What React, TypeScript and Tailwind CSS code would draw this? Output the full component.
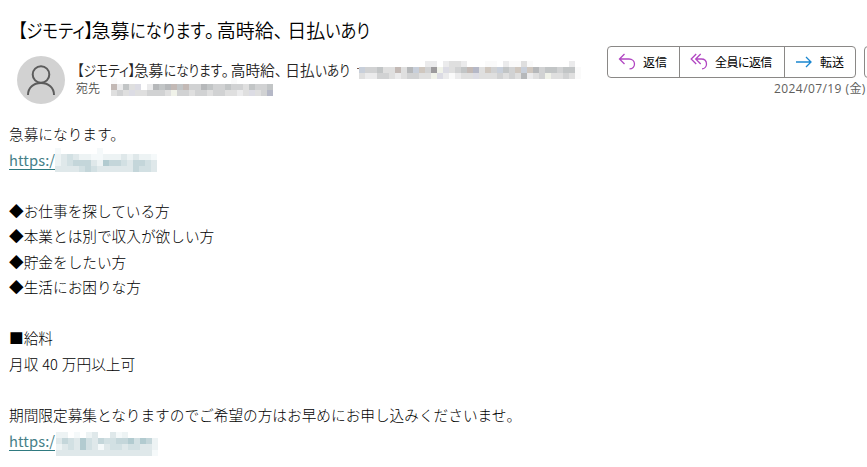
import React from 'react';

interface MosaicProps {
    rows: string[];
    palette: Record<string, string>;
    columns: number;
}

const grayPalette: Record<string, string> = {
    '.': 'transparent',
    a: '#fafafa',
    b: '#ebebec',
    c: '#dfdfdf',
    d: '#d1d2d3',
    e: '#c2c5c6',
    f: '#b6b8ba',
    g: '#9c9a9c',
    p: '#c3b9b5',
    r: '#cfc7bf',
    u: '#b5b8c7',
    v: '#dcdce4',
    w: '#c8cfda',
    y: '#f0f2e9',
};

const tealPalette: Record<string, string> = {
    '.': 'transparent',
    a: '#f5f9fa',
    b: '#edf3f4',
    c: '#dfe8ea',
    d: '#d2e0e3',
    e: '#c4d6da',
    f: '#b2cbd0',
    g: '#a5c0c7',
};

const senderMosaic = [
    '...........bb.bccb...aa.baaca......b.',
    'wddeccpcfwrdgyvcdepucrdwedrwrfdeedeea',
    'cbbddcbcddccyvbabccvcccdcdcfbcdyccdca',
];

const recipientMosaic = [
    'a...................a......',
    'pbecv.bfefpepddfeddeddcedde',
    'cdcvccdddcyddcddcddccbcvcdu',
];

const Mosaic: React.FC<MosaicProps> = ({ rows, palette, columns }) => (
    <div className="grid auto-rows-[6px]" style={{ gridTemplateColumns: `repeat(${columns}, 6px)` }} aria-hidden="true">
        {rows.flatMap((row, y) =>
            row.split('').map((cell, x) => (
                <span key={`${y}-${x}`} style={{ backgroundColor: palette[cell] }} />
            ))
        )}
    </div>
);

const ReplyIcon = () => (
    <svg width="18" height="18" viewBox="0 0 18 18" fill="none" stroke="#b146c2" strokeWidth="1.3">
        <path d="M6.500 1 1.500 6l5 5M1.500 6h9.500c3.200 0 5.500 2.100 5.500 5 0 2.700-2 4.800-5 4.800" />
    </svg>
);

const ReplyAllIcon = () => (
    <svg width="18" height="18" viewBox="0 0 18 18" fill="none" stroke="#b146c2" strokeWidth="1.3">
        <path d="M6.200 1 1.200 6l5 5M10.700 1l-5 5 5 5M5.700 6h5.500c3.200 0 5.300 2.100 5.300 5 0 2.700-2 4.800-4.500 4.800" />
    </svg>
);

const ForwardIcon = () => (
    <svg width="18" height="18" viewBox="0 0 18 18" fill="none" stroke="#1a86d0" strokeWidth="1.3">
        <path d="M1 9h15M11 4l5 5-5 5" />
    </svg>
);

// Kana are set narrower than kanji, so each run gets its own width
const Subject = () => (
    <span className="flex">
        <span className="w-[3.87em] shrink-0"><span className="inline-block origin-left scale-x-[0.87]">【ジモティ】</span></span>
        <span className="w-[2.03em] shrink-0">急募</span>
        <span className="w-[3.8em] shrink-0"><span className="inline-block origin-left scale-x-[0.86]">になります</span></span>
        <span className="w-[0.76em] shrink-0 pl-[0.13em]">。</span>
        <span className="w-[3em] shrink-0">高時給</span>
        <span className="w-[0.71em] shrink-0">、</span>
        <span className="w-[2em] shrink-0">日払</span>
        <span className="w-[2.25em] shrink-0"><span className="inline-block origin-left scale-x-[0.86]">いあり</span></span>
    </span>
);

const bodyLines = [
    '◆お仕事を探している方',
    '◆本業とは別で収入が欲しい方',
    '◆貯金をしたい方',
    '◆生活にお困りな方',
    '',
    '■給料',
    '月収 40 万円以上可',
    '',
    '期間限定募集となりますのでご希望の方はお早めにお申し込みくださいませ。',
];

const MaskedLink: React.FC<{ rows: string[]; className: string }> = ({ rows, className }) => (
    <div className="flex h-[25.56px] items-start">
        <a className="mt-[2px] h-[21px] w-[46px] shrink-0 border-b border-[#2f7a80] text-[14.7px] leading-[21px] font-normal tracking-[0.1px] text-[#467f88]">
            https:/
        </a>
        <div className={className}>
            <Mosaic rows={rows} palette={tealPalette} columns={17} />
        </div>
    </div>
);

export default function App() {
    return (
        <div className="h-[467px] w-[867px] overflow-hidden bg-white font-['Noto_Sans_CJK_JP',sans-serif] text-black">
            <h1 className="h-[46px] pt-[16px] pl-[18px] text-[19px] leading-[28px] font-[350] whitespace-nowrap [font-feature-settings:'palt']">
                <Subject />
            </h1>

            <header className="flex h-[75px] pl-[17px]">
                <div className="mt-[10px] flex size-[48px] shrink-0 justify-center rounded-full bg-[#d2d2d2]">
                    <svg width="48" height="48" viewBox="0 0 48 48" fill="none" stroke="#5c5c5c" strokeWidth="2">
                        <circle cx="24" cy="18.5" r="8.3" />
                        <path d="M11 39c0-7.500 5.500-12 13-12s13 4.500 13 12" />
                    </svg>
                </div>
                <div className="w-[542px] shrink-0 pt-[13px] pl-[11px]">
                    <div className="flex h-[21px] items-start whitespace-nowrap text-[#252423]">
                        <div className="w-[281px] pl-px text-[14.7px] leading-[21px] font-[350] [font-feature-settings:'palt']">
                            <Subject />
                        </div>
                        <span className="mt-[9px] h-px w-[2px] bg-[#7d5a48]" />
                        <div className="pt-[2px]">
                            <Mosaic rows={senderMosaic} palette={grayPalette} columns={37} />
                        </div>
                    </div>
                    <div className="flex h-[18px] items-start">
                        <span className="w-[35px] text-[12px] leading-[15px] font-[350] text-[#504e4c]">宛先</span>
                        <div className="-mt-[2px]">
                            <Mosaic rows={recipientMosaic} palette={grayPalette} columns={27} />
                        </div>
                    </div>
                </div>
                <div className="w-[267px] shrink-0">
                    <div className="flex h-[32px] gap-[8px] text-[12px] leading-[30px] text-black">
                        <div className="flex h-[32px] w-[249px] shrink-0 rounded-[4px] border border-[#8a8886]">
                            <button className="flex w-[72px] items-center border-r border-[#8a8886] pl-[10px]">
                                <ReplyIcon />
                                <span className="ml-[7px]">返信</span>
                            </button>
                            <button className="flex w-[105px] items-center border-r border-[#8a8886] pl-[10px]">
                                <ReplyAllIcon />
                                <span className="ml-[7px] tracking-[-0.55px] whitespace-nowrap [font-feature-settings:'palt']">全員に返信</span>
                            </button>
                            <button className="flex w-[70px] items-center pl-[10px]">
                                <ForwardIcon />
                                <span className="ml-[7px]">転送</span>
                            </button>
                        </div>
                        <div className="h-[32px] w-[40px] shrink-0 rounded-[4px] border border-[#8a8886]" />
                    </div>
                    <div className="pt-px pl-[167px] text-[12px] leading-[20px] tracking-[0.42px] whitespace-nowrap text-[#605e5c] font-['Open_Sans','Noto_Sans_CJK_JP',sans-serif]">
                        2024/07/19 (金)
                    </div>
                </div>
            </header>

            <main className="pl-[9px] text-[14.67px] leading-[25.56px] font-light whitespace-pre">
                <p className="h-[25.56px]">急募になります。</p>
                <MaskedLink
                    className="mt-[1px]"
                    rows={[
                        'a......a.........',
                        'bcdcbbaabbbcbcbba',
                        'bcdeeecbfeedceedc',
                        'ccccdedcccccceddc',
                    ]}
                />
                <p className="h-[25.56px]" />
                {bodyLines.map((line, i) => (
                    <p key={i} className="h-[25.56px] [word-spacing:0.7px]">{line}</p>
                ))}
                <MaskedLink
                    className="mt-[4px] ml-[1px]"
                    rows={[
                        'bb.a.bc..cab.....',
                        'cedcfdceddeefdfeb',
                        'bcdcfdcacddcddccb',
                        'cccccccccccccccca',
                    ]}
                />
            </main>
        </div>
    );
}
